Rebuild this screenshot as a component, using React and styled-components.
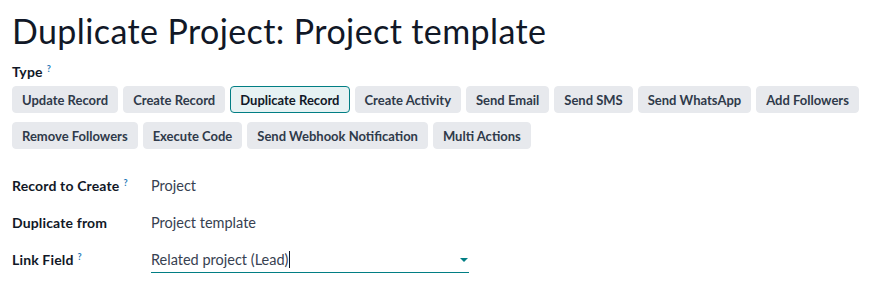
import React from "react";
import styled, { createGlobalStyle } from "styled-components";

const Global = createGlobalStyle`
  html, body { margin: 0; padding: 0; background: #ffffff; }
  body { font-family: "Lato", "Noto Sans", sans-serif; color: #374151; }
`;

const Page = styled.div`
  padding: 12px 4px 0 12px;
  display: flex;
  flex-direction: column;
`;

const Title = styled.h1`
  margin: 0;
  font-size: 34px;
  line-height: 38px;
  font-weight: 400;
  letter-spacing: 0.4px;
  color: #111827;
`;

const FieldLabel = styled.div`
  font-size: 14px;
  font-weight: 700;
  color: #111827;
  line-height: 18px;
  letter-spacing: 0.15px;
`;

const Help = styled.sup`
  color: #1f7ab8;
  font-size: 9px;
  font-weight: 700;
  margin-left: 4px;
  vertical-align: top;
  position: relative;
  top: -3px;
`;

const TypeBlock = styled.div`
  margin-top: 13px;
  display: flex;
  flex-direction: column;
  gap: 5px;
`;

const ButtonGrid = styled.div`
  display: flex;
  flex-wrap: wrap;
  column-gap: 5px;
  row-gap: 9px;
`;

const TypeButton = styled.button`
  font-family: inherit;
  font-size: 13px;
  font-weight: 700;
  height: 27px;
  padding: 0 9px;
  border-radius: 4px;
  border: 1px solid ${(p) => (p.$active ? "#017e84" : "#e7e9ed")};
  background: ${(p) => (p.$active ? "#e6f2f3" : "#e7e9ed")};
  color: ${(p) => (p.$active ? "#111827" : "#2f3a4a")};
  cursor: pointer;
`;

const Fields = styled.div`
  margin-top: 18px;
  display: grid;
  grid-template-columns: 139px 318px;
  align-items: center;
`;

const Value = styled.div`
  font-size: 14.5px;
  color: #374151;
  height: 37px;
  display: flex;
  align-items: center;
`;

const LabelCell = styled.div`
  height: 37px;
  display: flex;
  align-items: center;
`;

const SelectBox = styled.div`
  position: relative;
  height: 25px;
  margin-top: 1px;
  border-bottom: 1px solid #017e84;
  display: flex;
  align-items: center;
  font-size: 14.5px;
  color: #374151;
`;

const Caret = styled.span`
  display: inline-block;
  width: 1px;
  height: 17px;
  background: #111827;
  margin-left: 1px;
`;

const Arrow = styled.span`
  position: absolute;
  right: 1px;
  top: 11px;
  width: 0;
  height: 0;
  border-left: 4px solid transparent;
  border-right: 4px solid transparent;
  border-top: 4px solid #017e84;
`;

const types = [
  "Update Record",
  "Create Record",
  "Duplicate Record",
  "Create Activity",
  "Send Email",
  "Send SMS",
  "Send WhatsApp",
  "Add Followers",
  "Remove Followers",
  "Execute Code",
  "Send Webhook Notification",
  "Multi Actions",
];

export default function App() {
  return (
    <>
      <Global />
      <Page>
        <Title>Duplicate Project: Project template</Title>
        <TypeBlock>
          <FieldLabel>
            Type<Help>?</Help>
          </FieldLabel>
          <ButtonGrid>
            {types.map((t) => (
              <TypeButton key={t} $active={t === "Duplicate Record"}>
                {t}
              </TypeButton>
            ))}
          </ButtonGrid>
        </TypeBlock>
        <Fields>
          <LabelCell>
            <FieldLabel>
              Record to Create<Help>?</Help>
            </FieldLabel>
          </LabelCell>
          <Value>Project</Value>
          <LabelCell>
            <FieldLabel>Duplicate from</FieldLabel>
          </LabelCell>
          <Value>Project template</Value>
          <LabelCell>
            <FieldLabel>
              Link Field<Help>?</Help>
            </FieldLabel>
          </LabelCell>
          <SelectBox>
            Related project (Lead)
            <Caret />
            <Arrow />
          </SelectBox>
        </Fields>
      </Page>
    </>
  );
}
